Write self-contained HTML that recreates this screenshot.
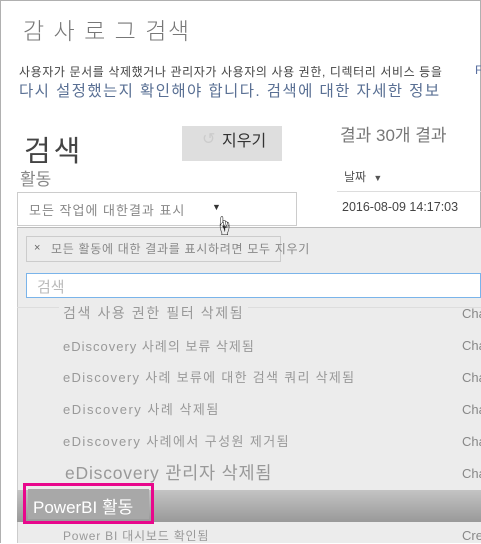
<!DOCTYPE html>
<html><head><meta charset="utf-8"><style>
*{margin:0;padding:0;box-sizing:border-box}
body{width:481px;height:543px;overflow:hidden;background:#fff;font-family:"Liberation Sans","Noto Sans CJK KR",sans-serif;position:relative}
.a{position:absolute;white-space:nowrap}
#frame{position:absolute;left:0;top:0;width:481px;height:543px;border:1px solid #b0b0b0;border-bottom:none}
.it{position:absolute;left:63px;font-size:13px;color:#999;white-space:nowrap;letter-spacing:1px}
.ch{position:absolute;left:462px;font-size:13px;color:#888}
</style></head><body>
<div id="frame"></div>
<div class="a" style="left:23px;top:12px;font-size:23px;color:#777;letter-spacing:1.5px;font-weight:300">감 사 로 그 검색</div>
<div class="a" style="left:19px;top:63px;font-size:12px;color:#444;letter-spacing:0.6px">사용자가 문서를 삭제했거나 관리자가 사용자의 사용 권한, 디렉터리 서비스 등을</div>
<div class="a" style="left:475px;top:63px;font-size:12px;color:#5a70a0">F</div>
<div class="a" style="left:19px;top:79px;font-size:15.5px;color:#5a7094;letter-spacing:1.4px">다시 설정했는지 확인해야 합니다. 검색에 대한 자세한 정보</div>
<div class="a" style="left:24px;top:128px;font-size:29px;color:#444;letter-spacing:3px">검색</div>
<div class="a" style="left:182px;top:126px;width:100px;height:35px;background:#dedede"></div>
<div class="a" style="left:202px;top:129px;font-size:16px;color:#ccc">↺</div>
<div class="a" style="left:222px;top:127px;font-size:16px;color:#333">지우기</div>
<div class="a" style="left:340px;top:121px;font-size:17px;color:#777">결과 30개 결과</div>
<div class="a" style="left:20px;top:165px;font-size:17px;color:#888">활동</div>
<div class="a" style="left:344px;top:168px;font-size:12px;color:#555">날짜 <span style="font-size:9px;margin-left:4px">▼</span></div>
<div class="a" style="left:337px;top:191px;width:144px;height:1px;background:#ddd"></div>
<div class="a" style="left:342px;top:200px;font-size:12.5px;color:#444">2016-08-09 14:17:03</div>
<div class="a" style="left:17px;top:192px;width:280px;height:34px;border:1px solid #ccc"></div>
<div class="a" style="left:29px;top:200px;font-size:13px;color:#888;letter-spacing:1px">모든 작업에 대한결과 표시</div>
<div class="a" style="left:212px;top:202px;font-size:9px;color:#333">▼</div>
<div class="a" style="left:17px;top:227px;width:464px;height:316px;background:#ececec;border-left:1px solid #ccc;border-top:1px solid #bbb"></div>
<div class="a" style="left:214px;top:210px;font-size:20px;color:#222">☝</div>
<div class="a" style="left:26px;top:236px;width:255px;height:26px;border:1px solid #ccc"></div>
<div class="a" style="left:34px;top:242px;font-size:11px;color:#666">×</div>
<div class="a" style="left:51px;top:240px;font-size:12px;color:#888;letter-spacing:0.7px">모든 활동에 대한 결과를 표시하려면 모두 지우기</div>
<div class="a" style="left:26px;top:273px;width:455px;height:25px;border:1px solid #7ab4ea;background:#fff"></div>
<div class="a" style="left:37px;top:276px;font-size:15px;color:#bbb">검색</div>
<div class="a" style="left:17px;top:307px;width:464px;height:1px;background:#ddd"></div>
<div class="it" style="top:303px;font-size:14px;background:#ececec;padding:0 4px;left:59px;letter-spacing:1.6px">검색 사용 권한 필터 삭제됨</div>
<div class="it" style="top:336px">eDiscovery 사례의 보류 삭제됨</div>
<div class="it" style="top:367px;letter-spacing:1.3px">eDiscovery 사례 보류에 대한 검색 쿼리 삭제됨</div>
<div class="it" style="top:399px;letter-spacing:1.5px">eDiscovery 사례 삭제됨</div>
<div class="it" style="top:431px;letter-spacing:1.4px">eDiscovery 사례에서 구성원 제거됨</div>
<div class="it" style="top:460px;font-size:17.5px;left:65px;letter-spacing:0.8px">eDiscovery 관리자 삭제됨</div>
<div class="ch" style="top:306px">Cha</div>
<div class="ch" style="top:338px">Cha</div>
<div class="ch" style="top:370px">Cha</div>
<div class="ch" style="top:402px">Cha</div>
<div class="ch" style="top:434px">Cha</div>
<div class="ch" style="top:466px">Cha</div>
<div class="a" style="left:17px;top:490px;width:464px;height:32px;background:linear-gradient(#c4c4c4,#999)"></div>
<div class="a" style="left:23px;top:483px;width:131px;height:41px;border:3px solid #e8078c"></div>
<div class="a" style="left:28px;top:489px;width:121px;height:30px;background:#a8a8a8"></div>
<div class="a" style="left:33px;top:493px;font-size:17px;color:#fff">PowerBI 활동</div>
<div class="it" style="top:527px;font-size:12px;letter-spacing:0.8px">Power BI 대시보드 확인됨</div>
<div class="ch" style="top:528px">Cre</div>
</body></html>
